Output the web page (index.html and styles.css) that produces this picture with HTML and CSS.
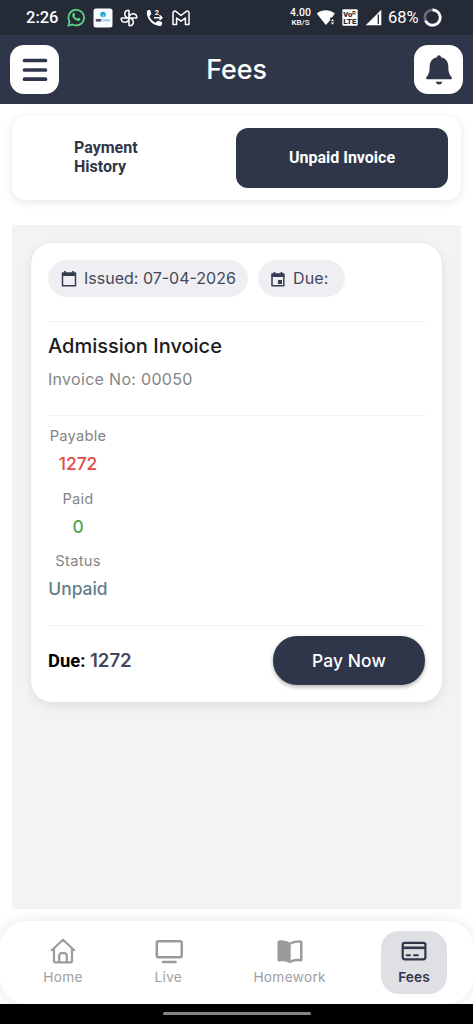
FILE: index.html
```html
<!DOCTYPE html>
<html lang="en">
<head>
<meta charset="utf-8">
<title>Fees</title>
<link rel="stylesheet" href="styles.css">
</head>
<body>
<div class="screen">
  <div class="status-bar">
    <div class="status-left">
      <span class="clock">2:26</span>
      <svg class="ic-whatsapp" width="19" height="19" viewBox="0 0 19 19"><path d="M1.3 17.7l1.2-4.3a7.8 7.8 0 1 1 3 3z" fill="none" stroke="#5dd68b" stroke-width="1.7" stroke-linejoin="round"/><path d="M6.2 5.2c.5-.5 1.100-.4 1.300.1l.6 1.400c.1.400-.5.900-.7 1.200.7 1.300 1.700 2.200 3.100 2.800.4-.3.800-1 1.200-.9l1.500.8c.5.300.2 1.200-.3 1.700-.7.700-1.800.8-3.300.1-2-.9-3.500-2.500-4.100-4-.4-1.300-.1-2.500.7-3.200z" fill="#5dd68b"/></svg>
      <svg class="ic-sbi" width="20" height="20" viewBox="0 0 20 20"><rect x=".5" y=".5" width="19" height="19" rx="2.500" fill="#f8fbfd"/><circle cx="10" cy="6.500" r="2.700" fill="#12a5d5"/><path d="M10 6.500v2.800" stroke="#fff" stroke-width=".8"/><rect x="2.800" y="11" width="5.500" height="2.600" fill="#554b78"/><path d="M9.500 12.300h7.500" stroke="#91cde8" stroke-width="2"/></svg>
      <svg class="ic-fan" width="18" height="18" viewBox="0 0 18 18" fill="none" stroke="#fff" stroke-width="1.600" stroke-linejoin="round"><path d="M9 9V1.900c0-.5-.3-.7-.7-.7a3.900 3.900 0 0 0-3.600 3.900c0 2.200 1.900 3.900 4.300 3.900zM9 9h7.100c.5 0 .7-.3.7-.7a3.900 3.900 0 0 0-3.900-3.600C10.700 4.700 9 6.600 9 9zM9 9v7.100c0 .5.300.7.700.7a3.900 3.900 0 0 0 3.600-3.900C13.300 10.700 11.400 9 9 9zM9 9H1.900c-.5 0-.7.300-.7.700a3.900 3.900 0 0 0 3.900 3.600C7.300 13.300 9 11.400 9 9z"/></svg>
      <svg class="ic-call" width="18" height="18" viewBox="0 0 18 18"><path d="M1 2.200C1.300 1 2.500.7 4.200 1l1.200 4-2 2.200c1.200 3 3.200 5.200 6.200 6.500l2.200-2 4.200 1.300c.4 2.600-.5 4-2.200 4C6.500 17-.2 9 1 2.200z" fill="#fff"/><path d="M8 8.700h8m-2.500-2.500L16 8.700l-2.500 2.400" stroke="#fff" stroke-width="1.400" fill="none"/><text x="8.800" y="6.300" class="tiny">2</text></svg>
      <svg class="ic-mail" width="18" height="16" viewBox="0 0 18 16"><path d="M1 14.600V3c0-2 1.800-2.400 3.100-1.400L9 5.500l4.900-3.900C15.200.6 17 1 17 3v11.600h-3.600V8L9 11.200 4.600 8v6.600z" fill="none" stroke="#fff" stroke-width="1.500" stroke-linejoin="round"/></svg>
    </div>
    <div class="status-right">
      <div class="speed"><b>4.00</b><small>KB/S</small></div>
      <svg class="ic-wifi" width="20" height="18" viewBox="0 0 20 18"><path d="M.8 4.600C6 .2 13.500.2 18.800 4.600L16 8.500h-1.800v2.800L9.800 16z" fill="#fff"/><path d="M14.900 12.300l1.600-2.300 1.600 2.300zM14.900 13.500l1.600 2.300 1.600-2.300z" fill="#fff"/></svg>
      <svg class="ic-volte" width="16" height="17" viewBox="0 0 16 17"><rect x=".3" y=".3" width="15.400" height="16.400" rx="1.300" fill="#fff"/><text x="1.300" y="7.800" class="volte">Voᴿ</text><text x="1.300" y="15" class="volte" textLength="13.200" lengthAdjust="spacingAndGlyphs">LTE</text></svg>
      <svg class="ic-signal" width="17" height="17" viewBox="0 0 17 17"><path d="M.7 16.300L16.300.7v15.600z" fill="#fff"/><path d="M13.300 5.500v9.500" stroke="#252a37" stroke-width="1.300"/></svg>
      <span class="percent">68%</span>
      <svg class="ic-ring" width="19" height="19" viewBox="0 0 19 19" fill="none" stroke-width="2.700"><circle cx="9.500" cy="9.500" r="7.700" stroke="#676c77"/><path d="M9.500 1.800a7.700 7.700 0 1 1-7 10.900" stroke="#fff"/></svg>
    </div>
  </div>

  <header class="app-bar">
    <button class="square-btn" aria-label="Menu">
      <svg width="28" height="26" viewBox="0 0 28 26"><path d="M3.500 3.500h21M3.500 13h21M3.500 22.200h21" stroke="#303649" stroke-width="3.700" stroke-linecap="round"/></svg>
    </button>
    <h1 class="title">Fees</h1>
    <button class="square-btn" aria-label="Notifications">
      <svg width="28" height="32" viewBox="0 0 28 32" fill="#303649"><path d="M14 1.300c1.200 0 2 .8 2 1.900 4.400.9 7.300 4.300 7.300 8.800 0 5.500.8 8.200 3.200 10.900.8 1 .4 2.300-.9 2.300H2.400c-1.300 0-1.700-1.300-.9-2.300 2.400-2.700 3.200-5.400 3.200-10.900 0-4.500 2.900-7.900 7.300-8.800 0-1.100.8-1.900 2-1.900z"/><path d="M10.700 27.800h6.600c-.5 1.800-1.700 2.700-3.300 2.700s-2.800-.9-3.300-2.700z"/></svg>
    </button>
  </header>

  <main class="content">
    <div class="tabs">
      <div class="tab"><span>Payment<br>History</span></div>
      <div class="tab tab-active"><span>Unpaid Invoice</span></div>
    </div>

    <section class="list">
      <article class="invoice">
        <div class="chips">
          <span class="chip">
            <svg width="18" height="18" viewBox="0 0 18 18"><path d="M2.500 3.200h13v12.500h-13z" fill="none" stroke="#363d52" stroke-width="1.500" stroke-linejoin="round"/><path d="M2 2.600h14v3.300H2zM4 1h1.700v2H4zM12.300 1H14v2h-1.700z" fill="#363d52"/></svg>
            <span class="issued">Issued: 07-04-2026</span>
          </span>
          <span class="chip chip-due">
            <svg width="16" height="17" viewBox="0 0 16 17"><path d="M2 3.200h11.800v11.600H2z" fill="none" stroke="#363d52" stroke-width="1.500" stroke-linejoin="round"/><path d="M1.500 2.600h12.800v3.300H1.500zM3.500 1h1.700v2H3.500zM10.600 1h1.700v2h-1.700zM8 8.900h4v4H8z" fill="#363d52"/></svg>
            <span>Due:</span>
          </span>
        </div>
        <div class="heading">
          <h2 class="name">Admission Invoice</h2>
          <p class="number">Invoice No: 00050</p>
        </div>
        <dl class="amounts">
          <dt>Payable</dt><dd class="red">1272</dd>
          <dt>Paid</dt><dd class="green">0</dd>
          <dt>Status</dt><dd class="slate">Unpaid</dd>
        </dl>
        <div class="footer">
          <div class="total">Due: <span>1272</span></div>
          <button class="pay">Pay Now</button>
        </div>
      </article>
    </section>
  </main>

  <nav class="bottom-nav">
    <div class="nav-item nav-home">
      <svg width="28" height="28" viewBox="0 0 28 28" fill="none" stroke="#9b9b9b" stroke-width="2.200" stroke-linecap="round" stroke-linejoin="round"><path d="M2.800 13.200L14 2.700l11.200 10.500M5 11.500v12.200c0 1 .6 1.600 1.600 1.600h14.800c1 0 1.600-.6 1.600-1.600V11.500M10.200 25v-6.200c0-1.800 1-2.700 2.600-2.700h2.400c1.600 0 2.600.9 2.600 2.700V25"/></svg>
      <span>Home</span>
    </div>
    <div class="nav-item nav-live">
      <svg width="30" height="28" viewBox="0 0 30 28" fill="none" stroke="#9b9b9b" stroke-width="2.600" stroke-linecap="round"><rect x="3.800" y="4.300" width="25" height="16" rx="1.800"/><path d="M10 25h12.500"/></svg>
      <span>Live</span>
    </div>
    <div class="nav-item nav-homework">
      <svg width="28" height="28" viewBox="0 0 28 28"><path d="M14 5.700C10.300 3.500 6 2.900 3 3.500c-1 .2-1.500.8-1.500 1.800v17.500c0 1.200.8 1.800 2 1.600 3.600-.4 7 .1 10.500 1.900 3.500-1.800 6.900-2.300 10.500-1.900 1.200.2 2-.4 2-1.600V5.300c0-1-.5-1.600-1.500-1.800-3-.6-7.300 0-11 2.200zM14.700 7.700c3-1.600 5.800-2.200 9.300-1.900v16.100c-3.600-.2-6.300.2-9.300 1.500z" fill="#9b9b9b" fill-rule="evenodd"/></svg>
      <span>Homework</span>
    </div>
    <div class="nav-item nav-fees">
      <svg width="28" height="28" viewBox="0 0 28 28" fill="none" stroke="#303649" stroke-width="2.200"><rect x="2.700" y="5.800" width="22.700" height="16.500" rx="2"/><path d="M3 10.800h22" stroke-width="2.600"/><path d="M6.700 18.200h3.200M14 18.200h3.800" stroke-linecap="round" stroke-width="2"/></svg>
      <span>Fees</span>
    </div>
  </nav>
  <div class="gesture-bar"><div class="handle"></div></div>
</div>
</body>
</html>
```
FILE: styles.css
```css
* { box-sizing: border-box; }
body, h1, h2, p, dl, dd { margin: 0; }
body { font-family: Inter, sans-serif; background: #fff; }
svg { display: block; flex: none; }
button { border: 0; padding: 0; font-family: inherit; }

.screen { width: 473px; height: 1024px; display: flex; flex-direction: column; overflow: hidden; }

.status-bar { height: 35px; flex: none; background: #252a37; color: #fff; display: flex; justify-content: space-between; padding: 0 31px 0 26px; font-family: Roboto, sans-serif; }
.status-left, .status-right { display: flex; align-items: center; }
.clock { width: 41px; font-size: 16.500px; font-weight: 500; white-space: nowrap; }
.ic-sbi { margin-left: 7px; }
.ic-fan { margin-left: 7px; }
.ic-call { margin-left: 8px; }
.ic-mail { margin-left: 8px; }
.tiny { font: 700 7.500px Roboto, sans-serif; fill: #fff; }
.speed { width: 23px; display: flex; flex-direction: column; align-items: center; }
.speed b { font-size: 10.500px; font-weight: 500; line-height: 10px; }
.speed small { font-size: 8px; font-weight: 500; line-height: 9px; }
.ic-wifi { margin-left: 4px; }
.ic-volte { margin-left: 6px; }
.volte { font: 900 7.500px Roboto, sans-serif; fill: #252a37; }
.ic-signal { margin-left: 7px; }
.percent { width: 35px; margin-left: 6px; font-size: 16.500px; white-space: nowrap; }

.app-bar { height: 69px; flex: none; background: #303649; display: flex; align-items: center; justify-content: space-between; padding: 0 10px; }
.square-btn { width: 49px; height: 49px; border-radius: 14px; background: #fff; display: flex; align-items: center; justify-content: center; }
.title { color: #fff; font-size: 26.800px; font-weight: 500; line-height: 32px; padding-bottom: 2px; }

.content { flex: 1; padding: 12px 12px 0; display: flex; flex-direction: column; gap: 25px; }
.tabs { height: 84px; flex: none; padding: 12px 13px 12px 12px; border-radius: 14px; background: #fff; box-shadow: 0 2px 10px rgba(0, 0, 0, .1); display: grid; grid-template-columns: 1fr 1fr; }
.tab { display: flex; align-items: center; border-radius: 12px; color: #303649; font: 700 16px/19px Roboto, sans-serif; padding: 0 0 2px 50px; white-space: nowrap; }
.tab-active { justify-content: center; padding: 0 0 2px; background: #303649; color: #fff; }

.list { height: 684px; flex: none; background: #f3f3f3; padding: 17px 18px; }
.invoice { height: 461px; padding: 17px; border: 1px solid #e6e6e6; border-radius: 22px; background: #fff; box-shadow: 0 4px 10px rgba(0, 0, 0, .07); display: flex; flex-direction: column; }
.invoice > * { flex: none; }
.chips { height: 61px; display: flex; align-items: flex-start; gap: 10px; }
.chip { width: 200px; height: 37px; border-radius: 19px; background: #efeef2; color: #43495a; display: flex; align-items: center; padding: 0 0 1px 12px; gap: 6px; font-size: 16px; white-space: nowrap; }
.chip svg { position: relative; top: 1px; }
.chip-due { width: 87px; gap: 7px; letter-spacing: .1px; }
.heading { height: 94px; border-top: 1px solid #f0f0f0; padding-top: 11px; }
.name { color: #1c1c1e; font-size: 20px; font-weight: 500; line-height: 26px; }
.number { margin-top: 9px; color: #858585; font-size: 16px; letter-spacing: .3px; line-height: 22px; }
.amounts { height: 210px; border-top: 1px solid #f0f0f0; padding-top: 9px; display: grid; grid-template-columns: 60px; grid-template-rows: repeat(3, 23px 39.700px); align-content: start; text-align: center; }
.amounts dt { color: #858585; font-size: 14.700px; letter-spacing: .25px; line-height: 23px; }
.amounts dd { font-size: 17.400px; font-weight: 500; line-height: 31px; }
.red { color: #e34b46; }
.green { color: #4ca650; }
.slate { color: #637f8d; }
.footer { border-top: 1px solid #f0f0f0; padding-top: 10px; display: flex; align-items: center; justify-content: space-between; }
.total { color: #000; font: 700 18.400px Roboto, sans-serif; padding-bottom: 2px; }
.total span { color: #43495a; font: 600 18.600px Inter, sans-serif; }
.pay { width: 152px; height: 49px; border-radius: 24px; background: #303649; color: #fff; font-size: 17.400px; font-weight: 500; letter-spacing: .1px; box-shadow: 0 2px 4px rgba(0, 0, 0, .3); }

.bottom-nav { height: 83px; flex: none; border-radius: 26px; background: #fff; box-shadow: 0 0 14px rgba(0, 0, 0, .1); display: flex; align-items: center; padding: 0 26px 0 30px; justify-content: space-between; }
.nav-item { width: 66px; height: 63px; display: flex; flex-direction: column; align-items: center; padding-top: 6px; color: #a0a0a0; font-size: 13.700px; letter-spacing: .3px; line-height: 17px; }
.nav-item span { margin-top: 4px; }
.nav-live { margin-left: -10px; }
.nav-homework { width: 78px; margin-right: 3px; }
.nav-fees { border-radius: 18px; background: #dfe0e4; color: #303649; font-weight: 600; letter-spacing: .1px; }
.gesture-bar { height: 20px; flex: none; position: relative; z-index: 1; background: #000; display: flex; justify-content: center; padding-top: 8px; }
.handle { width: 148px; height: 3px; border-radius: 2px; background: #858585; }
```
